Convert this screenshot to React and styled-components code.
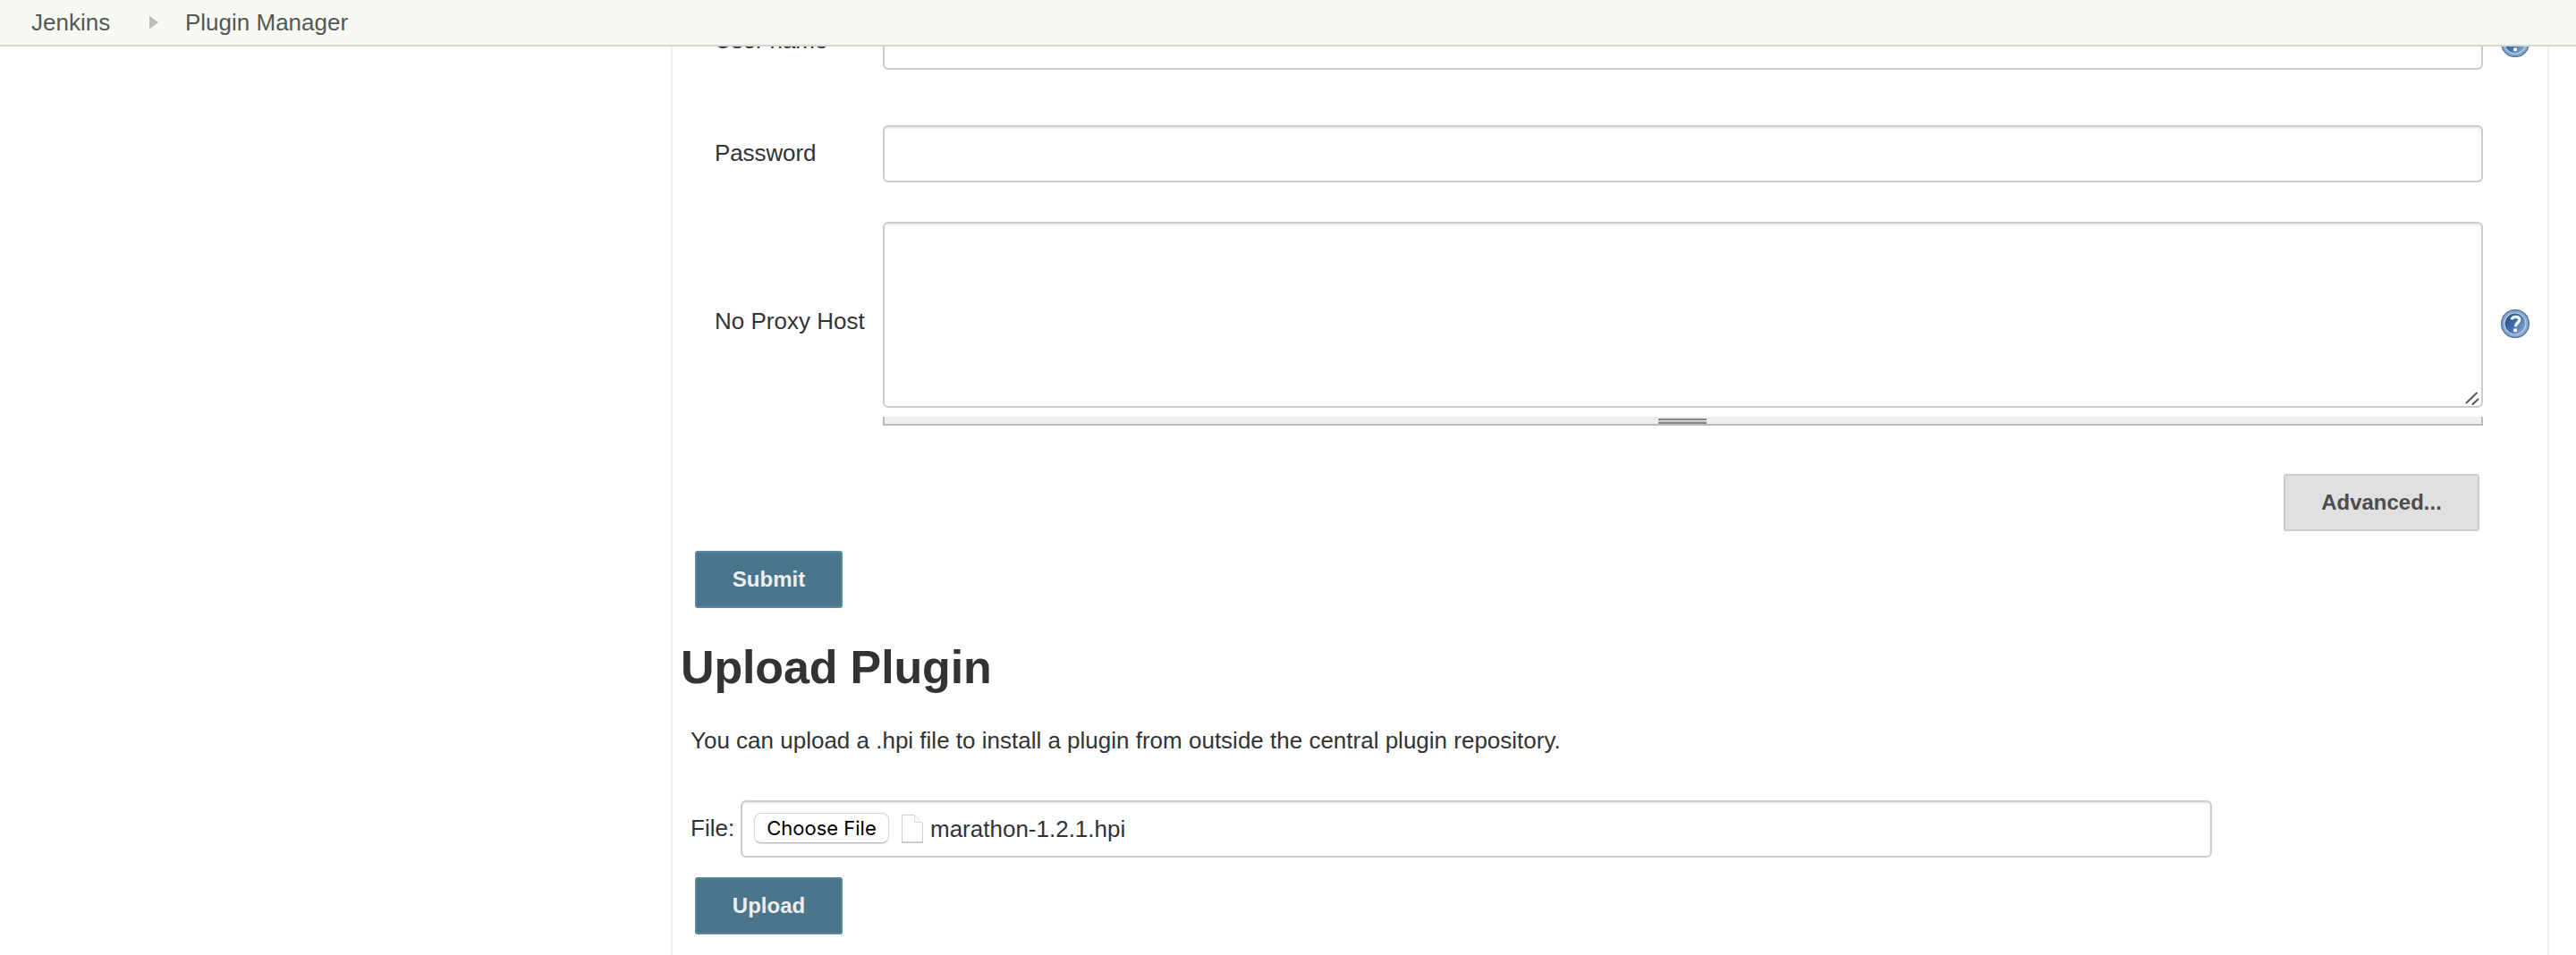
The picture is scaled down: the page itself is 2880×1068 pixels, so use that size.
import React from "react";
import styled, { createGlobalStyle } from "styled-components";

const GlobalStyle = createGlobalStyle`
  *, *::before, *::after { box-sizing: border-box; }
  body {
    margin: 0;
    background: #fff;
    color: #333;
    font: 26px/30px "Liberation Sans", Helvetica, Arial, sans-serif;
  }
  input, textarea, button { font: inherit; margin: 0; outline: none; }
`;

const Page = styled.div`
  display: flex;
  flex-direction: column;
  width: 2880px;
  height: 1068px;
  overflow: hidden;
`;

const Breadcrumbs = styled.nav`
  display: flex;
  align-items: center;
  flex: none;
  height: 52px;
  padding: 0 0 0 35px;
  background: #f6faf2;
  border-bottom: 2px solid #d3d7cf;
  color: #555753;
`;

const Crumb = styled.span`
  width: ${(p) => p.$width};
  padding-bottom: 1px;
  white-space: nowrap;
`;

const CrumbArrow = styled.svg`
  width: 10px;
  height: 16px;
  margin: 0 30px 0 0;
`;

const MainPanel = styled.main`
  flex: 1;
  min-height: 0;
  width: 2100px;
  margin-left: 750px;
  border: solid #efefef;
  border-width: 0 2px;
  overflow: hidden;
`;

const ProxyForm = styled.form`
  display: flex;
  flex-direction: column;
  margin-top: -38px;
`;

const FieldRow = styled.div`
  display: grid;
  grid-template-columns: 188px 1789px 20px 32px;
  align-items: center;
  padding-left: 47px;
  margin-bottom: ${(p) => p.$gap};
`;

const Label = styled.label`
  padding-bottom: ${(p) => p.$lift || "2px"};
  letter-spacing: ${(p) => p.$tracking || "0"};
  white-space: nowrap;
`;

const TextInput = styled.input`
  display: block;
  width: 100%;
  height: 64px;
  padding: 12px;
  background: #fff;
  border: 2px solid #ccc;
  border-radius: 6px;
  box-shadow: inset 0 2px 2px rgba(0, 0, 0, 0.075);
`;

const TextAreaGroup = styled.div`
  display: flex;
  flex-direction: column;
  gap: 10px;
`;

const TextAreaFrame = styled.div`
  position: relative;
  height: 208px;
`;

const TextArea = styled.textarea`
  display: block;
  width: 100%;
  height: 100%;
  padding: 12px;
  resize: none;
  background: #fff;
  border: 2px solid #ccc;
  border-radius: 6px;
  box-shadow: inset 0 2px 2px rgba(0, 0, 0, 0.075);
`;

const Grip = styled.svg`
  position: absolute;
  right: 4px;
  bottom: 2px;
  width: 16px;
  height: 16px;
`;

const ResizeBar = styled.div`
  display: flex;
  justify-content: center;
  height: 10px;
  padding: 2px 1px 0 0;
  background: #eee;
  border: solid #bbbbb4;
  border-width: 0 2px 2px;
`;

const ResizeHandle = styled.div`
  width: 54px;
  height: 6px;
  margin-left: -1px;
  border: solid #888;
  border-width: 2px 0;
  background: #ddd;
  box-shadow: inset 0 -1px 0 #c4c4c4;
`;

const HelpSvg = styled.svg`
  grid-column: 4;
  width: 32px;
  height: 32px;
  margin-top: ${(p) => p.$drop || "0"};
`;

const ButtonRow = styled.div`
  display: flex;
  justify-content: ${(p) => (p.$end ? "flex-end" : "flex-start")};
  padding: ${(p) => (p.$end ? "0 76px 0 0" : "0 0 0 25px")};
  margin-bottom: 22px;
`;

const Button = styled.button`
  width: ${(p) => p.$width};
  height: 64px;
  padding: 0 0 1px;
  border: 2px solid ${(p) => (p.$primary ? "#5788a1" : "#ccc")};
  border-radius: 3px;
  background: ${(p) => (p.$primary ? "#4b758b" : "#e0e0e0")};
  color: ${(p) => (p.$primary ? "#eee" : "#4d4d4d")};
  font-size: 24px;
  font-weight: bold;
  line-height: 28px;
  text-align: center;
`;

const Heading = styled.h1`
  margin: 14px 0 0 9px;
  font-size: 52px;
  line-height: 60px;
  font-weight: bold;
  letter-spacing: -0.15px;
`;

const UploadForm = styled.form`
  display: flex;
  flex-direction: column;
`;

const Hint = styled.p`
  margin: 37px 0 52px 20px;
  white-space: nowrap;
`;

const FileRow = styled.div`
  display: grid;
  grid-template-columns: 56px 1645px;
  align-items: center;
  padding-left: 20px;
  margin-bottom: 22px;
`;

const FileField = styled.div`
  display: flex;
  align-items: center;
  height: 64px;
  padding: 0 13px;
  background: #fff;
  border: 2px solid #ccc;
  border-radius: 6px;
  box-shadow: inset 0 2px 2px rgba(0, 0, 0, 0.075);
`;

const ChooseButton = styled.button`
  width: 151px;
  height: 34px;
  padding: 0;
  margin: 0 14px 2px 0;
  background: #fff;
  border: 1px solid #d4d4d4;
  border-bottom-color: #b8b8b8;
  border-radius: 8px;
  box-shadow: 0 1px 1px rgba(0, 0, 0, 0.12);
  color: #000;
  font: 22px/30px Inter, sans-serif;
  white-space: nowrap;
`;

const DocumentSvg = styled.svg`
  width: 24px;
  height: 32px;
  margin-right: 8px;
`;

const FileName = styled.span`
  white-space: nowrap;
`;

function HelpIcon({ id, drop }) {
  return (
    <HelpSvg $drop={drop} viewBox="0 0 32 32" role="img" aria-label="Help">
      <defs>
        <linearGradient id={id} x1="0" y1="0.2" x2="1" y2="0.9">
          <stop offset="0.15" stopColor="#2c5794" />
          <stop offset="0.5" stopColor="#4472ac" />
          <stop offset="1" stopColor="#8db2d8" />
        </linearGradient>
      </defs>
      <circle cx="16" cy="16" r="15.2" fill="#cfdbeb" stroke="#5a7db0" strokeWidth="1.8" />
      <circle cx="16" cy="16" r="13.2" fill="none" stroke="#7b9bc6" strokeWidth="1.4" />
      <circle cx="16" cy="16" r="11.4" fill={`url(#${id})`} />
      <path
        d="M12 11.4c.6-2.2 2.3-3.1 4.6-3.1 2.6 0 4.3 1.3 4.3 3.3 0 3-4.5 3.5-4.5 7.6"
        fill="none"
        stroke="#f6f9fc"
        strokeWidth="3.3"
      />
      <rect x="14.2" y="21.6" width="3.8" height="3.6" rx="1" fill="#fff" />
    </HelpSvg>
  );
}

function DocumentIcon() {
  return (
    <DocumentSvg viewBox="0 0 24 32" aria-hidden="true">
      <path d="M.5.5H14.5L23.5 9.5V31H.5Z" fill="#fff" stroke="#d0d0d0" />
      <path d="M14.5.5V8.5H22.5" fill="#fafafa" stroke="#d8d8d8" />
      <path d="M0 31H24" stroke="#b5b5b5" />
    </DocumentSvg>
  );
}

const stop = (e) => e.preventDefault();

export default function App() {
  return (
    <Page>
      <GlobalStyle />
      <Breadcrumbs>
        <Crumb $width="132px">Jenkins</Crumb>
        <CrumbArrow viewBox="0 0 10 16" aria-hidden="true">
          <path d="M0 0.5L10 8L0 15.5Z" fill="#bbbdb9" />
        </CrumbArrow>
        <Crumb $width="auto">Plugin Manager</Crumb>
      </Breadcrumbs>
      <MainPanel>
        <ProxyForm onSubmit={stop}>
          <FieldRow $gap="62px">
            <Label htmlFor="user" $tracking="-0.1px">User name</Label>
            <TextInput id="user" />
            <HelpIcon id="help-user" drop="4px" />
          </FieldRow>
          <FieldRow $gap="44px">
            <Label htmlFor="password" $tracking="-0.1px">Password</Label>
            <TextInput id="password" type="password" />
          </FieldRow>
          <FieldRow $gap="54px">
            <Label htmlFor="hosts" $lift="6px">No Proxy Host</Label>
            <TextAreaGroup>
              <TextAreaFrame>
                <TextArea id="hosts" />
                <Grip viewBox="0 0 16 16" aria-hidden="true">
                  <path d="M1.5 12.5L13 1.5M8.5 14L14.5 8.500" stroke="#555" strokeWidth="2" strokeLinecap="round" />
                </Grip>
              </TextAreaFrame>
              <ResizeBar>
                <ResizeHandle />
              </ResizeBar>
            </TextAreaGroup>
            <HelpIcon id="help-hosts" />
          </FieldRow>
          <ButtonRow $end>
            <Button type="button" $width="219px">Advanced...</Button>
          </ButtonRow>
          <ButtonRow>
            <Button type="submit" $width="165px" $primary>Submit</Button>
          </ButtonRow>
        </ProxyForm>
        <Heading>Upload Plugin</Heading>
        <UploadForm onSubmit={stop}>
          <Hint>You can upload a .hpi file to install a plugin from outside the central plugin repository.</Hint>
          <FileRow>
            <Label $lift="2px">File:</Label>
            <FileField>
              <ChooseButton type="button">Choose File</ChooseButton>
              <DocumentIcon />
              <FileName>marathon-1.2.1.hpi</FileName>
            </FileField>
          </FileRow>
          <ButtonRow>
            <Button type="submit" $width="165px" $primary>Upload</Button>
          </ButtonRow>
        </UploadForm>
      </MainPanel>
    </Page>
  );
}
